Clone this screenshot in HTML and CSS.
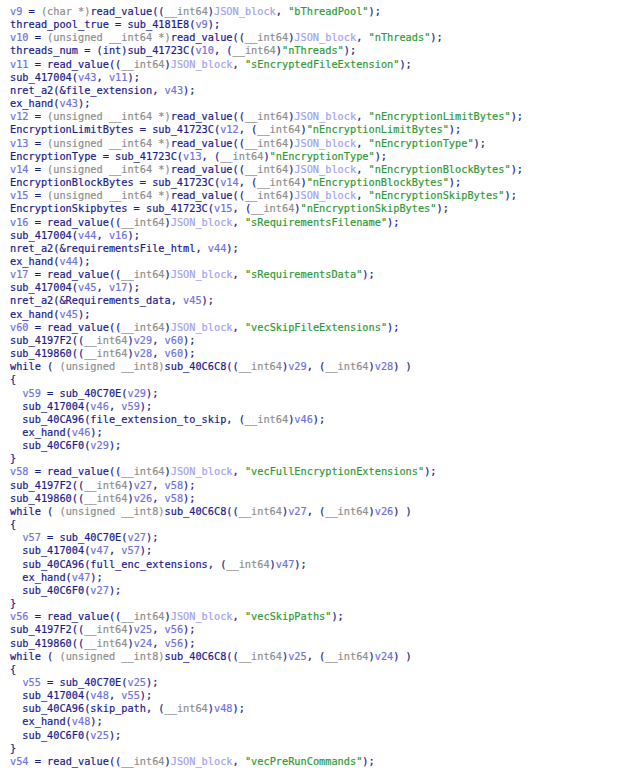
FILE: index.html
```html
<!DOCTYPE html>
<html>
<head>
<meta charset="utf-8">
<link rel="stylesheet" href="styles.css">
</head>
<body>
<pre class="code"><span class="lv">v9</span> = <span class="ty">(char *)</span>read_value((<span class="ty">__int64</span>)<span class="gd">JSON_block</span>, <span class="st">"bThreadPool"</span>);
thread_pool_true = sub_4181E8(<span class="lv">v9</span>);
<span class="lv">v10</span> = <span class="ty">(unsigned __int64 *)</span>read_value((<span class="ty">__int64</span>)<span class="gd">JSON_block</span>, <span class="st">"nThreads"</span>);
threads_num = (int)sub_41723C(<span class="lv">v10</span>, (<span class="ty">__int64</span>)<span class="st">"nThreads"</span>);
<span class="lv">v11</span> = read_value((<span class="ty">__int64</span>)<span class="gd">JSON_block</span>, <span class="st">"sEncryptedFileExtension"</span>);
sub_417004(<span class="lv">v43</span>, <span class="lv">v11</span>);
nret_a2(&amp;file_extension, <span class="lv">v43</span>);
ex_hand(<span class="lv">v43</span>);
<span class="lv">v12</span> = <span class="ty">(unsigned __int64 *)</span>read_value((<span class="ty">__int64</span>)<span class="gd">JSON_block</span>, <span class="st">"nEncryptionLimitBytes"</span>);
EncryptionLimitBytes = sub_41723C(<span class="lv">v12</span>, (<span class="ty">__int64</span>)<span class="st">"nEncryptionLimitBytes"</span>);
<span class="lv">v13</span> = <span class="ty">(unsigned __int64 *)</span>read_value((<span class="ty">__int64</span>)<span class="gd">JSON_block</span>, <span class="st">"nEncryptionType"</span>);
EncryptionType = sub_41723C(<span class="lv">v13</span>, (<span class="ty">__int64</span>)<span class="st">"nEncryptionType"</span>);
<span class="lv">v14</span> = <span class="ty">(unsigned __int64 *)</span>read_value((<span class="ty">__int64</span>)<span class="gd">JSON_block</span>, <span class="st">"nEncryptionBlockBytes"</span>);
EncryptionBlockBytes = sub_41723C(<span class="lv">v14</span>, (<span class="ty">__int64</span>)<span class="st">"nEncryptionBlockBytes"</span>);
<span class="lv">v15</span> = <span class="ty">(unsigned __int64 *)</span>read_value((<span class="ty">__int64</span>)<span class="gd">JSON_block</span>, <span class="st">"nEncryptionSkipBytes"</span>);
EncryptionSkipbytes = sub_41723C(<span class="lv">v15</span>, (<span class="ty">__int64</span>)<span class="st">"nEncryptionSkipBytes"</span>);
<span class="lv">v16</span> = read_value((<span class="ty">__int64</span>)<span class="gd">JSON_block</span>, <span class="st">"sRequirementsFilename"</span>);
sub_417004(<span class="lv">v44</span>, <span class="lv">v16</span>);
nret_a2(&amp;requirementsFile_html, <span class="lv">v44</span>);
ex_hand(<span class="lv">v44</span>);
<span class="lv">v17</span> = read_value((<span class="ty">__int64</span>)<span class="gd">JSON_block</span>, <span class="st">"sRequirementsData"</span>);
sub_417004(<span class="lv">v45</span>, <span class="lv">v17</span>);
nret_a2(&amp;Requirements_data, <span class="lv">v45</span>);
ex_hand(<span class="lv">v45</span>);
<span class="lv">v60</span> = read_value((<span class="ty">__int64</span>)<span class="gd">JSON_block</span>, <span class="st">"vecSkipFileExtensions"</span>);
sub_4197F2((<span class="ty">__int64</span>)<span class="lv">v29</span>, <span class="lv">v60</span>);
sub_419860((<span class="ty">__int64</span>)<span class="lv">v28</span>, <span class="lv">v60</span>);
while ( <span class="ty">(unsigned __int8)</span>sub_40C6C8((<span class="ty">__int64</span>)<span class="lv">v29</span>, (<span class="ty">__int64</span>)<span class="lv">v28</span>) )
{
  <span class="lv">v59</span> = sub_40C70E(<span class="lv">v29</span>);
  sub_417004(<span class="lv">v46</span>, <span class="lv">v59</span>);
  sub_40CA96(file_extension_to_skip, (<span class="ty">__int64</span>)<span class="lv">v46</span>);
  ex_hand(<span class="lv">v46</span>);
  sub_40C6F0(<span class="lv">v29</span>);
}
<span class="lv">v58</span> = read_value((<span class="ty">__int64</span>)<span class="gd">JSON_block</span>, <span class="st">"vecFullEncryptionExtensions"</span>);
sub_4197F2((<span class="ty">__int64</span>)<span class="lv">v27</span>, <span class="lv">v58</span>);
sub_419860((<span class="ty">__int64</span>)<span class="lv">v26</span>, <span class="lv">v58</span>);
while ( <span class="ty">(unsigned __int8)</span>sub_40C6C8((<span class="ty">__int64</span>)<span class="lv">v27</span>, (<span class="ty">__int64</span>)<span class="lv">v26</span>) )
{
  <span class="lv">v57</span> = sub_40C70E(<span class="lv">v27</span>);
  sub_417004(<span class="lv">v47</span>, <span class="lv">v57</span>);
  sub_40CA96(full_enc_extensions, (<span class="ty">__int64</span>)<span class="lv">v47</span>);
  ex_hand(<span class="lv">v47</span>);
  sub_40C6F0(<span class="lv">v27</span>);
}
<span class="lv">v56</span> = read_value((<span class="ty">__int64</span>)<span class="gd">JSON_block</span>, <span class="st">"vecSkipPaths"</span>);
sub_4197F2((<span class="ty">__int64</span>)<span class="lv">v25</span>, <span class="lv">v56</span>);
sub_419860((<span class="ty">__int64</span>)<span class="lv">v24</span>, <span class="lv">v56</span>);
while ( <span class="ty">(unsigned __int8)</span>sub_40C6C8((<span class="ty">__int64</span>)<span class="lv">v25</span>, (<span class="ty">__int64</span>)<span class="lv">v24</span>) )
{
  <span class="lv">v55</span> = sub_40C70E(<span class="lv">v25</span>);
  sub_417004(<span class="lv">v48</span>, <span class="lv">v55</span>);
  sub_40CA96(skip_path, (<span class="ty">__int64</span>)<span class="lv">v48</span>);
  ex_hand(<span class="lv">v48</span>);
  sub_40C6F0(<span class="lv">v25</span>);
}
<span class="lv">v54</span> = read_value((<span class="ty">__int64</span>)<span class="gd">JSON_block</span>, <span class="st">"vecPreRunCommands"</span>);</pre>
</body>
</html>
```

FILE: styles.css
```css
html, body {
  margin: 0;
  padding: 0;
  background: #ffffff;
}

.code {
  margin: 0;
  padding: 5px 0 0 10px;
  font-family: "DejaVu Sans Mono", "Liberation Mono", monospace;
  font-size: 10.27px;
  line-height: 13.16px;
  color: #1c1c8a;
  white-space: pre;
  -webkit-text-stroke: 0.2px currentColor;
}

.lv { color: #7272dc; }
.ty { color: #8e8e8e; }
.gd { color: #a2a2f2; }
.st { color: #2f9a37; }
```
